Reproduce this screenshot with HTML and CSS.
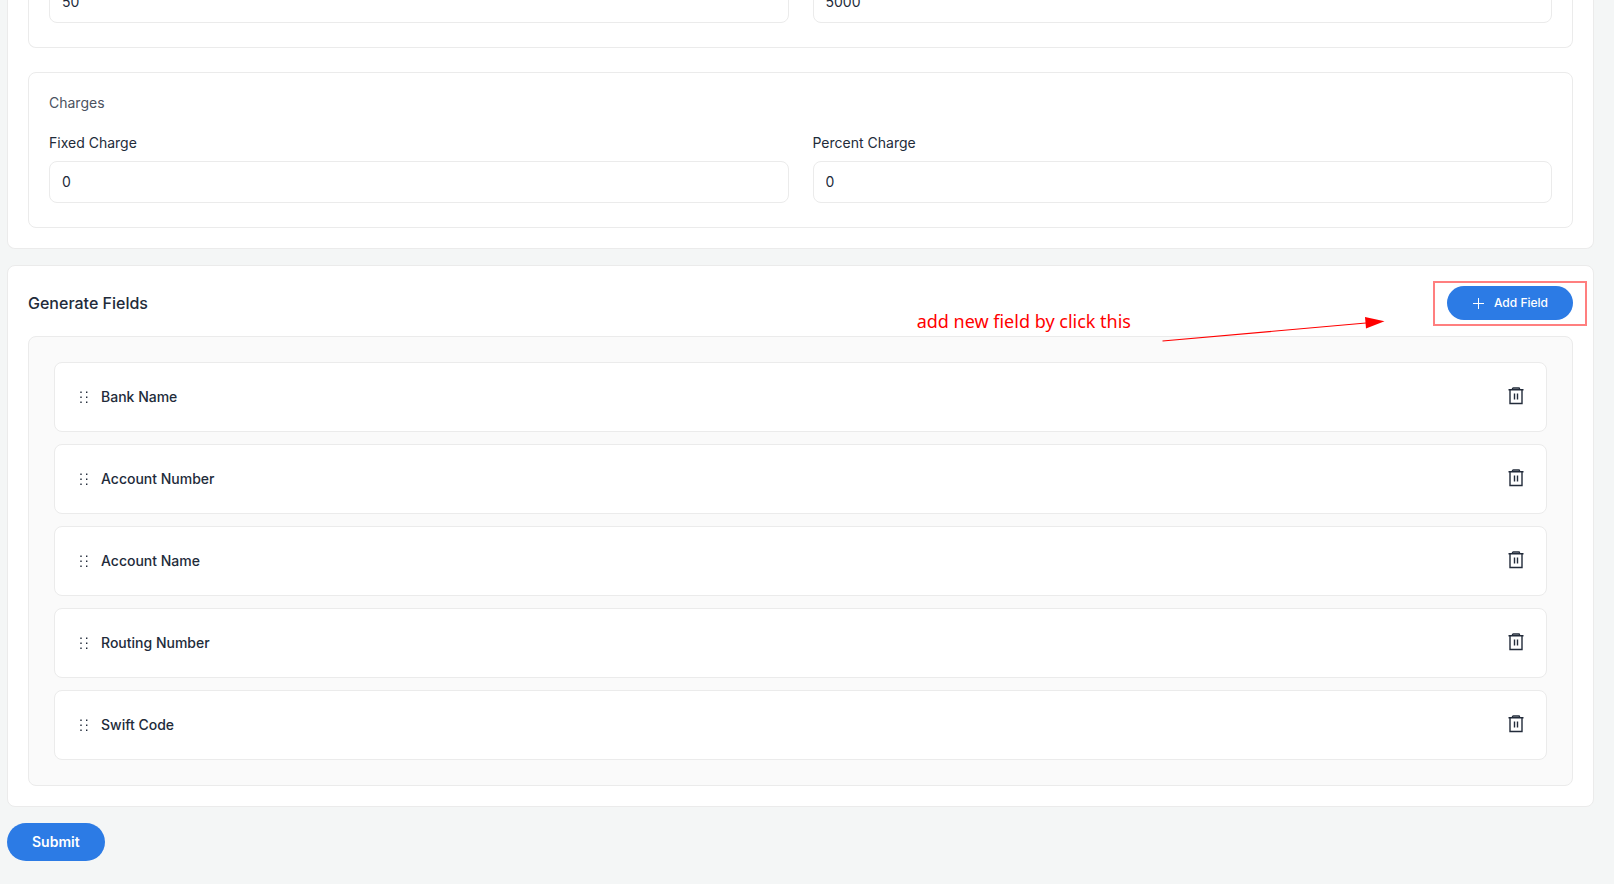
FILE: index.html
```html
<!DOCTYPE html>
<html lang="en">
<head>
<meta charset="utf-8">
<title>Generate Fields</title>
<link rel="stylesheet" href="styles.css">
</head>
<body>
<svg class="sprite" aria-hidden="true">
  <symbol id="grip" viewBox="0 0 8 13">
    <path d="M.3.6h1.4v1.4H.3zM6 .6h1.4v1.4H6zM.3 5.600h1.4v1.400H.3zM6 5.600h1.400v1.400H6zM.3 10.600h1.400v1.400H.3zM6 10.600h1.400v1.400H6z" fill="currentColor"/>
  </symbol>
  <symbol id="trash" viewBox="0 0 16 18">
    <path d="M0.5 2.800h15M4.500 2.500V1.700Q4.500 1 5.300 1h5.400q.8 0 .8.7v.8M2 3v13.500h12V3M6.500 6.500v6M9.500 6.500v6" fill="none" stroke="currentColor" stroke-width="1.4"/>
  </symbol>
</svg>
<form class="page">
  <section class="card card-top">
    <div class="group group-open">
      <div class="columns">
        <input class="input" type="text" aria-label="Minimum" value="50">
        <input class="input" type="text" aria-label="Maximum" value="5000">
      </div>
    </div>
    <div class="group">
      <h2 class="group-title">Charges</h2>
      <div class="columns">
        <div class="field">
          <label class="label" for="fixed">Fixed Charge</label>
          <input class="input" id="fixed" type="text" value="0">
        </div>
        <div class="field">
          <label class="label" for="percent">Percent Charge</label>
          <input class="input" id="percent" type="text" value="0">
        </div>
      </div>
    </div>
  </section>

  <section class="card">
    <header class="card-header">
      <h2 class="card-title">Generate Fields</h2>
      <button class="button button-small" type="button">
        <svg class="plus" viewBox="0 0 11 11" aria-hidden="true"><path d="M5.500 0v11M0 5.500h11" stroke="currentColor" stroke-width="1"/></svg>
        Add Field
      </button>
      <span class="note">add new field by click this</span>
      <svg class="arrow" viewBox="0 0 226 28" aria-hidden="true">
        <path d="M2.500 26 206 8" stroke="#f00" stroke-width="1.2"/>
        <path d="M205 2 224.500 6.200 206 13.500z" fill="#f00"/>
      </svg>
      <span class="highlight"></span>
    </header>
    <ul class="list">
      <li class="item"><svg class="grip"><use href="#grip"/></svg><span class="item-name">Bank Name</span><button class="delete" type="button" aria-label="Delete Bank Name"><svg class="trash"><use href="#trash"/></svg></button></li>
      <li class="item"><svg class="grip"><use href="#grip"/></svg><span class="item-name">Account Number</span><button class="delete" type="button" aria-label="Delete Account Number"><svg class="trash"><use href="#trash"/></svg></button></li>
      <li class="item"><svg class="grip"><use href="#grip"/></svg><span class="item-name">Account Name</span><button class="delete" type="button" aria-label="Delete Account Name"><svg class="trash"><use href="#trash"/></svg></button></li>
      <li class="item"><svg class="grip"><use href="#grip"/></svg><span class="item-name">Routing Number</span><button class="delete" type="button" aria-label="Delete Routing Number"><svg class="trash"><use href="#trash"/></svg></button></li>
      <li class="item"><svg class="grip"><use href="#grip"/></svg><span class="item-name">Swift Code</span><button class="delete" type="button" aria-label="Delete Swift Code"><svg class="trash"><use href="#trash"/></svg></button></li>
    </ul>
  </section>

  <button class="button" type="submit">Submit</button>
</form>
</body>
</html>
```

FILE: styles.css
```css
* {
  box-sizing: border-box;
}

body {
  margin: 0;
  background: #f4f6f6;
  color: #222b3a;
  font: 14px/22px Inter, sans-serif;
}

h2 {
  margin: 0;
}

.sprite {
  position: absolute;
  width: 0;
  height: 0;
}

.page {
  display: flex;
  flex-direction: column;
  align-items: flex-start;
  gap: 16px;
  padding: 0 20px 20px 7px;
  overflow: hidden;
}

.card {
  width: 100%;
  padding: 20px;
  background: #fff;
  border: 1px solid #ebebeb;
  border-radius: 8px;
}

/* The first card continues above the visible area. */
.card-top {
  display: flex;
  flex-direction: column;
  gap: 24px;
  margin-top: -19px;
  padding-top: 0;
  border-top: 0;
  border-radius: 0 0 8px 8px;
}

.group {
  padding: 19px 20px 24px;
  border: 1px solid #ebebeb;
  border-radius: 8px;
}

.group-open {
  padding-top: 0;
  border-top: 0;
  border-radius: 0 0 8px 8px;
}

.group-title {
  margin-bottom: 18px;
  color: #4b5260;
  font-size: 14px;
  font-weight: 400;
}

.columns {
  display: grid;
  grid-template-columns: 1fr 1fr;
  gap: 24px;
}

.field {
  display: flex;
  flex-direction: column;
  gap: 7px;
}

.input {
  width: 100%;
  height: 42px;
  padding: 0 12px 2px;
  background: #fff;
  border: 1px solid #ebebeb;
  border-radius: 8px;
  color: inherit;
  font: inherit;
}

.card-header {
  position: relative;
  display: flex;
  align-items: center;
  justify-content: space-between;
  margin-bottom: 16px;
}

.card-title {
  font-size: 16px;
  font-weight: 500;
}

.button {
  display: inline-flex;
  align-items: center;
  justify-content: center;
  height: 38px;
  padding: 0 25px;
  background: #2c7be5;
  border: 0;
  border-radius: 20px;
  color: #fff;
  font: 600 14px/22px Inter, sans-serif;
}

.button-small {
  gap: 10px;
  height: 34px;
  padding: 0 25px 0 26px;
  font-size: 12px;
  font-weight: 500;
}

.plus {
  width: 11px;
  height: 11px;
}

.note {
  position: absolute;
  top: 22px;
  right: 442px;
  color: #f00;
  font: 18px/26px "Noto Sans", sans-serif;
  white-space: nowrap;
}

.arrow {
  position: absolute;
  top: 29px;
  right: 187px;
  width: 226px;
  height: 28px;
}

.highlight {
  position: absolute;
  top: -5px;
  right: -14px;
  width: 154px;
  height: 45px;
  border: 2px solid rgba(255, 0, 0, 0.5);
  pointer-events: none;
}

.list {
  display: flex;
  flex-direction: column;
  gap: 12px;
  margin: 0;
  padding: 25px;
  background: #fafafa;
  border: 1px solid #ebebeb;
  border-radius: 8px;
  list-style: none;
}

.item {
  display: flex;
  align-items: center;
  gap: 13px;
  height: 70px;
  padding: 0 22px 0 25px;
  background: #fff;
  border: 1px solid #ebebeb;
  border-radius: 8px;
}

.grip {
  width: 8px;
  height: 13px;
}

.item-name {
  flex: 1;
  font-weight: 500;
}

.delete {
  display: flex;
  padding: 0 0 3px;
  background: none;
  border: 0;
  color: inherit;
}

.trash {
  width: 16px;
  height: 18px;
}
```
